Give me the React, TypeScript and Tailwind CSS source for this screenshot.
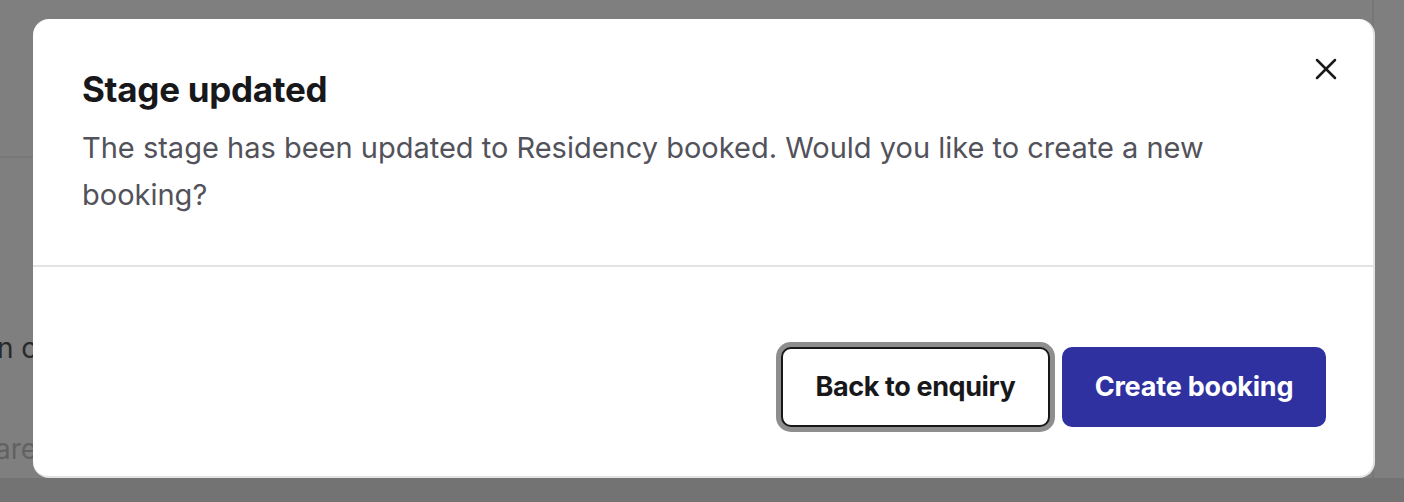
import { X } from 'lucide-react';

const BackgroundPage = () => {
  return (
    <div className="flex h-[502px] w-full flex-col bg-white">
      <div className="flex flex-1">
        <div className="flex flex-1 flex-col">
          <div className="h-[158px] border-b-2 border-[#eeeeee]" />
          <div className="flex flex-col overflow-hidden">
            <p className="-ml-[58px] mt-[170px] whitespace-nowrap text-[28px] leading-[40px] text-[#545454]">
              Open conversation
            </p>
            <p className="-ml-[5px] mt-[61px] whitespace-nowrap text-[28px] leading-[40px] text-[#c4c4c4]">
              are
            </p>
          </div>
        </div>
        <div className="w-[32px] border-l-2 border-[#eeeeee]" />
      </div>
      <div className="h-[24px] bg-[#e6e6e6]" />
    </div>
  );
};

export default function App() {
  return (
    <div
      className="relative h-[502px] w-full overflow-hidden"
      style={{ fontFamily: 'Inter, "Noto Sans", sans-serif' }}>
      <BackgroundPage />

      <div className="absolute inset-0 bg-black/50 pl-[33px] pt-[19px]">
        <div className="flex w-[1342px] flex-col rounded-[16px] border-r-2 border-b-2 border-[#e2e2e2] bg-white">
          <div className="flex justify-between pl-[49px] pr-[29px] pt-[48px] pb-[47px]">
            <div className="flex w-[1180px] flex-col">
              <h2 className="text-[35px] font-bold leading-[44px] tracking-[-0.3px] text-[#18181b]">
                Stage updated
              </h2>
              <p className="mt-[13px] text-[29px] leading-[47px] text-[#52525b]">
                The stage has been updated to Residency booked. Would you like to create a new
                booking?
              </p>
            </div>
            <button className="-mt-[16px] flex h-[36px] w-[36px] items-center justify-center self-start text-[#1a1a1a]">
              <X size={36} strokeWidth={1.7} />
            </button>
          </div>

          <div className="h-[2px] bg-[#e4e4e7]" />

          <div className="flex justify-end gap-[12px] pt-[80px] pb-[49px] pr-[47px]">
            <button className="h-[80px] w-[269px] rounded-[10px] border-2 border-[#18181b] bg-white text-[27px] font-bold tracking-[-0.4px] text-[#18181b] shadow-[0_0_0_5px_#8e8e8e]">
              Back to enquiry
            </button>
            <button className="h-[80px] w-[264px] rounded-[10px] bg-[#2f31a0] text-[27px] font-bold tracking-[-0.2px] text-white">
              Create booking
            </button>
          </div>
        </div>
      </div>
    </div>
  );
}
